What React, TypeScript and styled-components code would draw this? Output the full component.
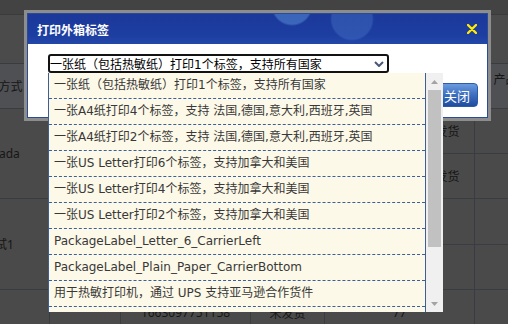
import React from "react";
import styled, { createGlobalStyle } from "styled-components";

// Estilos globais
const GlobalStyle = createGlobalStyle`
  html, body {
    margin: 0;
    padding: 0;
  }
  body {
    width: 508px;
    height: 324px;
    overflow: hidden;
    background: #4a4a4a;
    font-family: "DejaVu Sans", "Noto Sans CJK SC", sans-serif;
  }
`;

const Page = styled.div`
  position: relative;
  width: 508px;
  height: 324px;
  overflow: hidden;
  background: #4a4a4a;
  display: flex;
  flex-direction: column;
`;

/* background page (dimmed by the modal) */
const TopStrip = styled.div`
  flex-shrink: 0;
  height: 14px;
  background: #434343;
  border-bottom: 1px solid #3b3b3b;
`;

const Toolbar = styled.div`
  flex-shrink: 0;
  height: 48px;
  background: #4b4b4b;
`;

const Table = styled.table`
  flex-shrink: 0;
  margin-left: -53px;
  width: 613px;
  border-collapse: collapse;
  table-layout: fixed;
  font-family: "Noto Sans", "Noto Sans CJK SC", sans-serif;
  font-size: 12px;
  color: #161616;
`;

const Row = styled.tr<{ $h: number; $head?: boolean }>`
  height: ${(p) => p.$h}px;
  background: ${(p) => (p.$head ? "#4e5054" : "transparent")};
`;

const Cell = styled.td<{ $up?: number }>`
  border: 1px solid #393c42;
  text-align: center;
  vertical-align: middle;
  padding: 0 0 ${(p) => p.$up ?? 0}px;
  white-space: nowrap;
  overflow: hidden;
`;

/* dialog */
const Dialog = styled.div`
  position: absolute;
  left: 24px;
  top: 10px;
  width: 467px;
  box-sizing: border-box;
  border: 3px solid #8d8d8d;
  background: #fff;
  z-index: 2;
`;

const DialogInner = styled.div`
  border: 1px solid #2a4c94;
  display: flex;
  flex-direction: column;
`;

const TitleBar = styled.div`
  height: 30px;
  display: flex;
  align-items: center;
  justify-content: space-between;
  padding: 0 10px 0 9px;
  background:
    radial-gradient(circle 21px at 264px -9px, rgba(78, 128, 204, 0.62) 0 19px, transparent 21px),
    radial-gradient(circle 22px at 324px 5px, rgba(70, 116, 198, 0.42) 0 20px, transparent 22px),
    linear-gradient(180deg, #1b389a 0%, #1d3ea1 70%, #2347a9 100%);
`;

const Title = styled.span`
  color: #fff;
  font-family: "Noto Sans CJK SC", sans-serif;
  font-size: 12px;
  font-weight: bold;
`;

const CloseX = styled.button`
  border: none;
  background: transparent;
  padding: 0;
  width: 10px;
  height: 10px;
  display: flex;
`;

const Body = styled.div`
  padding: 10px 9px 10px 20px;
  display: flex;
  flex-direction: column;
  gap: 10px;
`;

const SelectWrap = styled.div`
  position: relative;
  width: 341px;
  z-index: 3;
`;

const SelectBox = styled.div`
  height: 19px;
  box-sizing: border-box;
  border: 2px solid #121212;
  border-radius: 3px;
  display: flex;
  align-items: center;
  justify-content: space-between;
  padding: 0 3px 0 0;
  font-size: 12px;
  color: #000;
  white-space: nowrap;
`;

const Popup = styled.div`
  position: absolute;
  top: 100%;
  left: 0;
  width: 395px;
  height: 239px;
  box-sizing: border-box;
  border-left: 1px solid #3d5f96;
  background: #fdf9e8;
  display: flex;
  overflow: hidden;
`;

const Options = styled.ul`
  flex: 1;
  min-width: 0;
  margin: 0;
  padding: 0;
  list-style: none;
  border-right: 1px solid #3d5f96;
  overflow: hidden;
`;

const Option = styled.li`
  height: 25px;
  line-height: 25px;
  padding-left: 5px;
  border-bottom: 1px dashed #3d5f96;
  font-size: 12px;
  color: #383838;
  white-space: nowrap;
`;

const ScrollBar = styled.div`
  width: 17px;
  flex-shrink: 0;
  background: #f0f0f0;
  display: flex;
  flex-direction: column;
`;

const ScrollArrow = styled.div`
  height: 17px;
  display: flex;
  align-items: center;
  justify-content: center;
`;

const Track = styled.div`
  flex: 1;
  display: flex;
  justify-content: center;
`;

const Thumb = styled.div`
  width: 13px;
  height: 157px;
  background: #c1c1c1;
`;

const Footer = styled.div`
  display: flex;
  justify-content: flex-end;
`;

const Button = styled.button`
  width: 42px;
  height: 24px;
  box-sizing: border-box;
  border: 1px solid #2f5aa8;
  border-radius: 4px;
  background: linear-gradient(180deg, #6a9be0 0%, #3f72c2 45%, #1f4c9e 100%);
  color: #fff;
  font-family: "Noto Sans CJK SC", sans-serif;
  font-size: 13px;
  padding: 0;
`;

const options = [
  "一张纸（包括热敏纸）打印1个标签，支持所有国家",
  "一张A4纸打印4个标签，支持 法国,德国,意大利,西班牙,英国",
  "一张A4纸打印2个标签，支持 法国,德国,意大利,西班牙,英国",
  "一张US Letter打印6个标签，支持加拿大和美国",
  "一张US Letter打印4个标签，支持加拿大和美国",
  "一张US Letter打印2个标签，支持加拿大和美国",
  "PackageLabel_Letter_6_CarrierLeft",
  "PackageLabel_Plain_Paper_CarrierBottom",
  "用于热敏打印机，通过 UPS 支持亚马逊合作货件",
  "PackageLabel_Thermal_NonPCP",
];

const App: React.FC = () => {
  return (
    <React.Fragment>
      <GlobalStyle />
      <Page>
        <TopStrip />
        <Toolbar />
        <Table>
          <colgroup>
            <col style={{ width: 102 }} />
            <col style={{ width: 71 }} />
            <col style={{ width: 130 }} />
            <col style={{ width: 74 }} />
            <col style={{ width: 150 }} />
            <col style={{ width: 86 }} />
          </colgroup>
          <tbody>
            <Row $h={45} $head>
              <Cell>运输方式</Cell>
              <Cell />
              <Cell />
              <Cell />
              <Cell />
              <Cell $up={14}>产品信息</Cell>
            </Row>
            <Row $h={45}>
              <Cell rowSpan={2}>Canada</Cell>
              <Cell />
              <Cell />
              <Cell />
              <Cell>仓库已处理，等待发货</Cell>
              <Cell />
            </Row>
            <Row $h={45}>
              <Cell />
              <Cell />
              <Cell />
              <Cell>仓库已处理，等待发货</Cell>
              <Cell />
            </Row>
            <Row $h={46}>
              <Cell rowSpan={2}>测试1</Cell>
              <Cell />
              <Cell />
              <Cell />
              <Cell />
              <Cell />
            </Row>
            <Row $h={45}>
              <Cell />
              <Cell />
              <Cell />
              <Cell />
              <Cell />
            </Row>
            <Row $h={46}>
              <Cell />
              <Cell />
              <Cell>1663097751158</Cell>
              <Cell>未发货</Cell>
              <Cell>77</Cell>
              <Cell />
            </Row>
          </tbody>
        </Table>

        <Dialog>
          <DialogInner>
            <TitleBar>
              <Title>打印外箱标签</Title>
              <CloseX aria-label="close">
                <svg width="10" height="10" viewBox="0 0 10 10">
                  <path d="M1 1 L9 9 M9 1 L1 9" stroke="#ffea00" strokeWidth="2.4" strokeLinecap="round" />
                </svg>
              </CloseX>
            </TitleBar>
            <Body>
              <SelectWrap>
                <SelectBox>
                  <span>{options[0]}</span>
                  <svg width="10" height="6" viewBox="0 0 10 6">
                    <path d="M1 1 L5 5 L9 1" fill="none" stroke="#4a5878" strokeWidth="2" />
                  </svg>
                </SelectBox>
                <Popup>
                  <Options>
                    {options.map((o) => (
                      <Option key={o}>{o}</Option>
                    ))}
                  </Options>
                  <ScrollBar>
                    <ScrollArrow>
                      <svg width="7" height="4" viewBox="0 0 7 4">
                        <path d="M0 4 L3.5 0 L7 4 Z" fill="#a3a3a3" />
                      </svg>
                    </ScrollArrow>
                    <Track>
                      <Thumb />
                    </Track>
                    <ScrollArrow>
                      <svg width="7" height="4" viewBox="0 0 7 4">
                        <path d="M0 0 L7 0 L3.5 4 Z" fill="#a3a3a3" />
                      </svg>
                    </ScrollArrow>
                  </ScrollBar>
                </Popup>
              </SelectWrap>
              <Footer>
                <Button>关闭</Button>
              </Footer>
            </Body>
          </DialogInner>
        </Dialog>
      </Page>
    </React.Fragment>
  );
};

export default App;
